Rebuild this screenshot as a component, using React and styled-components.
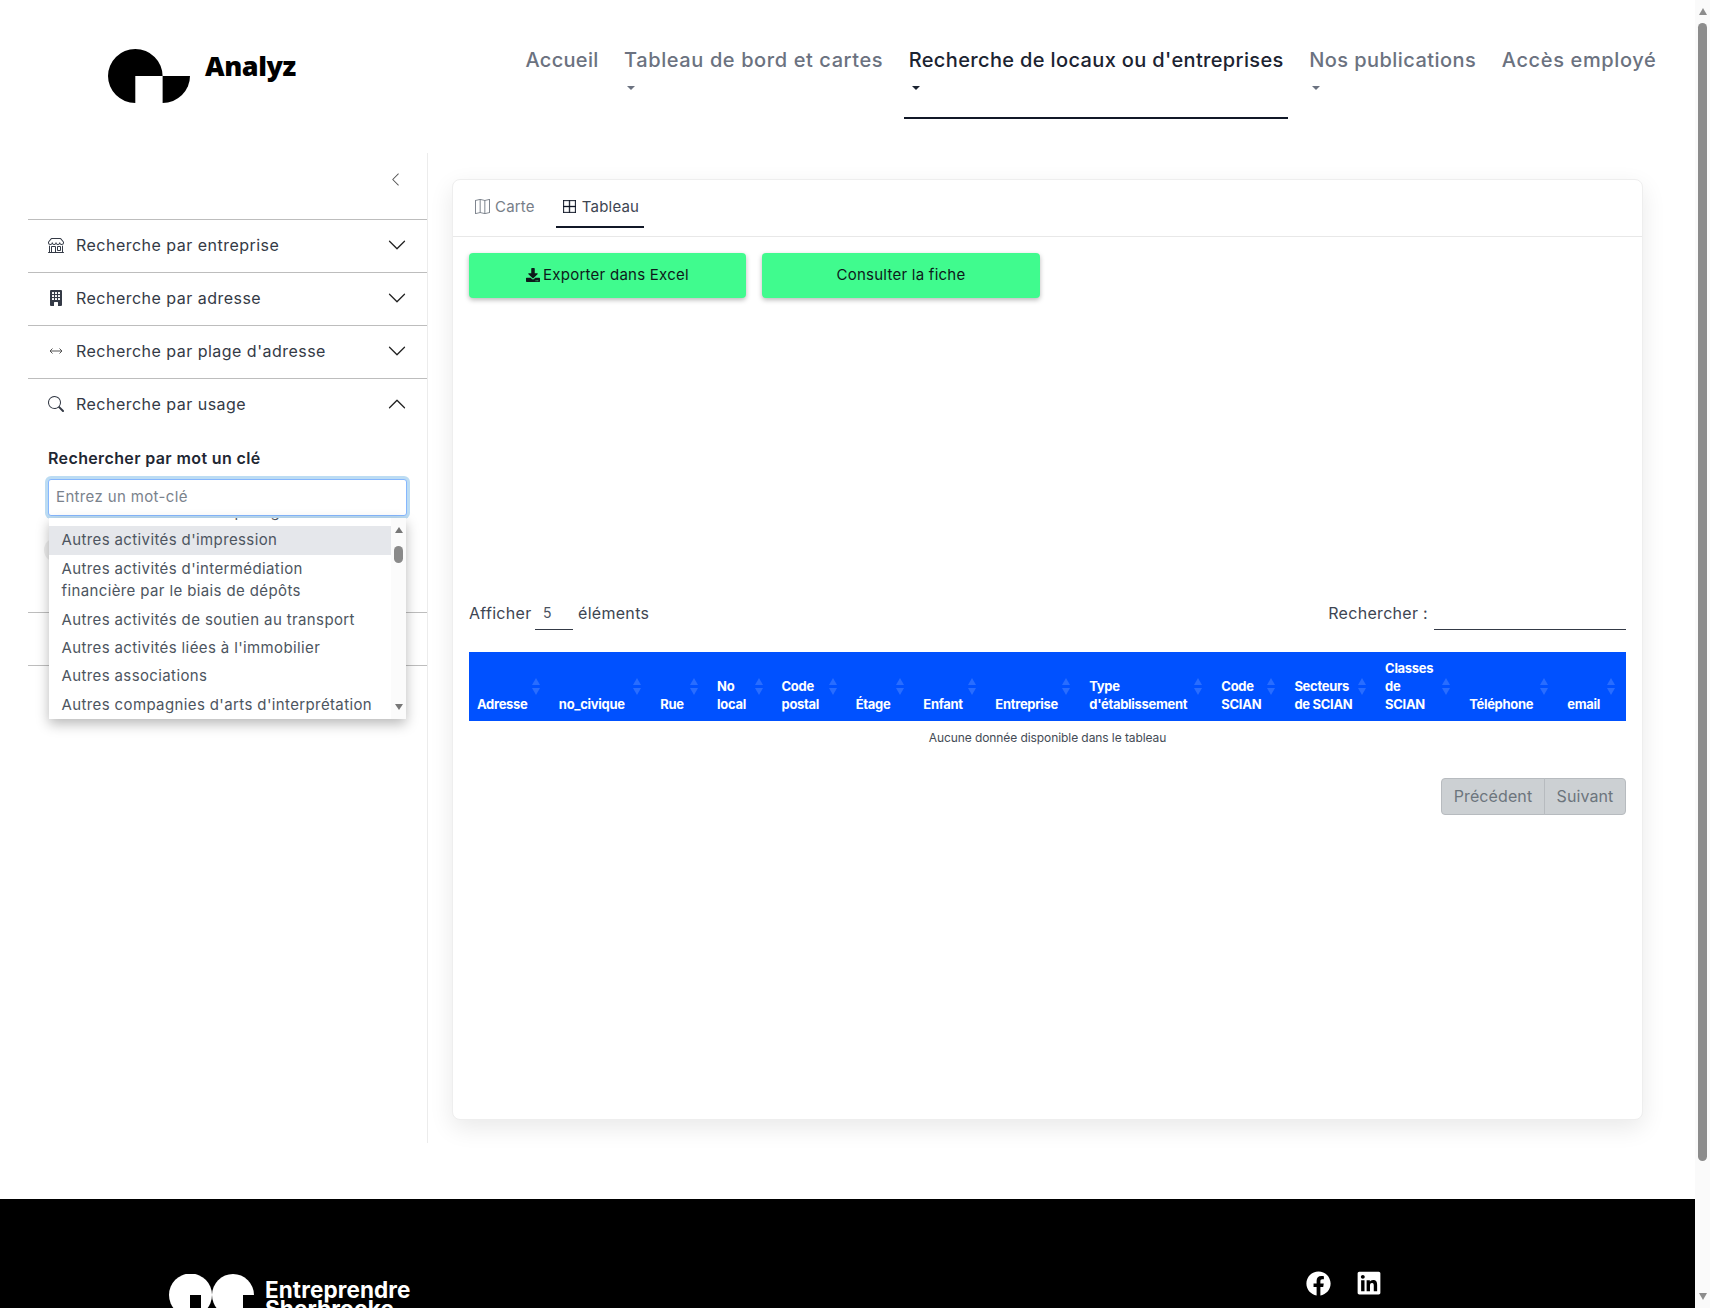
import React from "react";
import styled, { createGlobalStyle } from "styled-components";
import { BsShop, BsBuildingFill, BsSearch, BsChevronDown, BsChevronUp, BsChevronLeft, BsMap, BsBorderAll } from "react-icons/bs";
import { FaDownload, FaFacebook, FaLinkedin } from "react-icons/fa";

const Global = createGlobalStyle`
  html, body { margin: 0; padding: 0; height: 1308px; overflow: hidden; background: #fff; }
  body { font-family: Inter, "Open Sans", "Liberation Sans", sans-serif; color: #343a46; }
  * { box-sizing: border-box; }
`;

const Frame = styled.div`display: flex; height: 1308px; overflow: hidden;`;
const PageArea = styled.div`flex: 1; min-width: 0; display: flex; flex-direction: column;`;

const Triangle = styled.span`
  display: block; width: 0; height: 0;
  border-left: ${p => p.$w / 2}px solid transparent;
  border-right: ${p => p.$w / 2}px solid transparent;
  ${p => (p.$up ? "border-bottom" : "border-top")}: ${p => p.$h}px solid ${p => p.$color};
`;

const Rail = styled.div`
  width: 15px; background: #fafafa; display: flex; flex-direction: column; align-items: center;
  padding: 8px 0 8px;
`;
const RailThumb = styled.div`
  width: 9px; height: 1138px; margin-top: 8px; background: #8c8c8c; border-radius: 5px;
`;
const RailEnd = styled.div`margin-top: auto;`;

const Header = styled.header`height: 153px; display: flex; align-items: flex-start; flex: none;`;
const Brand = styled.div`display: flex; align-items: flex-start; padding: 49px 0 0 108px;`;
const BrandName = styled.span`
  margin: 0 0 0 15px; font-family: "Open Sans", sans-serif; font-weight: 800; font-size: 27px; line-height: 33px; color: #000; letter-spacing: -0.45px;
`;
const Nav = styled.nav`display: flex; margin: 45px 34px 0 auto; gap: 16.5px; height: 74px;`;
const NavItem = styled.a`
  padding: 0 4.5px; border-bottom: 2px solid ${p => (p.$active ? "#111827" : "transparent")};
  color: ${p => (p.$active ? "#1b2331" : "#6b7280")};
  font-size: 20px; font-weight: 500; line-height: 30px; letter-spacing: ${p => p.$ls || "0"};
  white-space: nowrap; display: flex; flex-direction: column; align-items: flex-start;
`;
const Caret = styled.span`margin: 11px 0 0 3px; display: block;`;

const Body = styled.div`display: flex; height: 990px; flex: none;`;
const Sidebar = styled.aside`
  width: 400px; margin-left: 28px; border-right: 1px solid #ececec; flex: none;
`;
const CollapseBar = styled.div`
  height: 66px; display: flex; justify-content: flex-end; padding: 19px 24px 0 0; color: #555; font-size: 15px;
`;
const Row = styled.div`
  height: 53px; border-top: 1px solid #bdbdbd; display: flex; align-items: center; padding: 0 20px 2px 20px;
  font-size: 16px; letter-spacing: 0.48px; color: #343a46;
  ${p => p.$last && "border-bottom: 1px solid #bdbdbd; height: 54px;"}
`;
const RowIcon = styled.span`width: 16px; height: 16px; display: flex; align-items: center; justify-content: center; margin-right: 12px; font-size: 16px; flex: none;`;
const RowChevron = styled.span`margin-left: auto; display: flex; font-size: 20px; color: #222;`;
const Panel = styled.div`height: 181px; padding: 15px 20px 0 20px; position: relative;`;
const FieldLabel = styled.div`font-size: 16px; font-weight: 600; line-height: 24px; color: #1f2733; letter-spacing: 0.37px;`;
const SearchBox = styled.div`position: relative; margin-top: 9px;`;
const KeywordInput = styled.div`
  height: 37px; border: 1px solid #86b7fe; border-radius: 3px; box-shadow: 0 0 0 3px #bcdcf3;
  padding: 0 7px; font-size: 15px; line-height: 34px; color: #7a828c; letter-spacing: 0.36px; background: #fff;
`;
const HiddenChip = styled.div`width: 60px; height: 24px; margin: 22px 0 0 -4px; border-radius: 12px; background: #eee;`;
const Dropdown = styled.div`
  position: absolute; top: 39px; left: 1px; width: 357px; height: 201px; background: #fff;
  box-shadow: 0 5px 12px rgba(0,0,0,.28); display: flex; overflow: hidden; z-index: 5;
`;
const OptionList = styled.div`flex: 1; min-width: 0; margin-top: -20px;`;
const Option = styled.div`
  padding: 3px 12.5px; font-size: 15px; line-height: 22.4px; color: #4d5560; letter-spacing: 0.38px;
  ${p => p.$hi && "background: #e5e7eb;"}
`;
const ListRail = styled.div`width: 15px; background: #fbfbfb; display: flex; flex-direction: column; align-items: center; padding: 9px 0 9px;`;
const ListThumb = styled.div`width: 9px; height: 17px; margin-top: 13px; border-radius: 5px; background: #8a8a8a;`;

const Main = styled.main`flex: 1; min-width: 0; padding: 26px 52px 23px 24px;`;
const Card = styled.section`
  height: 941px; background: #fff; border: 1px solid #eee; border-radius: 8px;
  box-shadow: 0 8px 24px rgba(0,0,0,.09);
`;
const Tabs = styled.div`height: 57px; border-bottom: 1px solid #e8e8e8; display: flex; gap: 15px; padding-left: 16px;`;
const Tab = styled.div`
  height: 48px; padding: 6px ${p => p.$right}px 0 ${p => p.$left}px; display: flex; align-items: center; gap: ${p => p.$gap}px; font-size: 15px; letter-spacing: 0.2px;
  color: ${p => (p.$active ? "#3d4552" : "#777e88")};
  border-bottom: 2px solid ${p => (p.$active ? "#111827" : "transparent")};
  svg { color: ${p => (p.$active ? "#111827" : "#777e88")}; ${p => p.$active && "stroke: currentColor; stroke-width: 0.5;"} }
`;
const Actions = styled.div`display: flex; gap: 16px; padding: 16px 0 0 16px;`;
const ActionButton = styled.button`
  width: ${p => p.$w}px; height: 45px; border: 0; border-radius: 4px; background: #40fb8e;
  box-shadow: 0 2px 5px rgba(0,0,0,.28); display: flex; align-items: center; justify-content: center; gap: 3px; padding: 0 0 2px;
  font-family: inherit; font-size: 15px; letter-spacing: 0.25px; color: #0d1a1a;
`;
const TableArea = styled.div`padding: 302px 16px 0 16px;`;
const Controls = styled.div`display: flex; align-items: flex-start; height: 30px;`;
const ControlText = styled.span`font-size: 16px; line-height: 26px; letter-spacing: 0.3px; color: #3d4552;`;
const SelectBox = styled.div`
  width: 38px; height: 30px; margin: 0 5px 0 3.5px; border-bottom: 1px solid #343a46; padding-left: 8px; font-size: 14px; line-height: 26px; color: #4a5260;
`;
const FilterInput = styled.div`width: 192px; height: 30px; margin-left: 6px; border-bottom: 1px solid #343a46;`;
const Push = styled.div`margin-left: auto;`;
const Table = styled.table`width: 100%; margin-top: 22px; border-collapse: collapse; table-layout: fixed;`;
const HeadCell = styled.th`
  position: relative; background: #0051ff; color: #fff; padding: 7px 8px 8px; text-align: left; vertical-align: bottom;
  font-size: 13px; line-height: 18px; font-weight: 700; letter-spacing: -0.3px; white-space: pre-line;
`;
const Sorter = styled.span`position: absolute; top: 26px; right: 11px; display: flex; flex-direction: column; gap: 3px;`;
const EmptyCell = styled.td`height: 32px; text-align: center; font-size: 12px; color: #444b55; letter-spacing: -0.08px; padding: 0;`;
const Pager = styled.div`display: flex; justify-content: flex-end; margin-top: 25px;`;
const PageButton = styled.div`
  height: 37px; width: ${p => p.$w}px; background: #ccd0d3; border: 1px solid #b7bbbf; color: #6c757d; font-size: 16px; line-height: 35px;
  text-align: center; letter-spacing: 0.1px;
  border-radius: ${p => (p.$first ? "4px 0 0 4px" : "0 4px 4px 0")};
  ${p => !p.$first && "margin-left: -1px;"}
`;

const Footer = styled.footer`
  margin-top: 56px; height: 109px; flex: none; background: #000; overflow: hidden; display: flex; align-items: flex-start; padding: 71px 313px 0 169px;
`;
const FooterBrand = styled.div`display: flex; align-items: flex-start; padding-top: 4px;`;
const FooterName = styled.div`
  margin: 6px 0 0 11px; color: #fff; font-size: 22.5px; font-weight: 700; line-height: 19px; letter-spacing: 0.1px; white-space: pre-line;
`;
const Socials = styled.div`margin-left: auto; display: flex; align-items: center; gap: 25px; color: #fff;`;

const columns = [
  ["Adresse", 81.8], ["no_civique", 101.4], ["Rue", 56.7], ["No\nlocal", 64.4], ["Code\npostal", 74.1], ["Étage", 67.6], ["Enfant", 72],
  ["Entreprise", 93.8], ["Type\nd'établissement", 132], ["Code\nSCIAN", 73], ["Secteurs\nde SCIAN", 90.6], ["Classes\nde\nSCIAN", 84], ["Téléphone", 98], ["email", 66.6],
];

const options = [
  "Autres activités d'entreposage", "Autres activités d'impression", "Autres activités d'intermédiation financière par le biais de dépôts",
  "Autres activités de soutien au transport", "Autres activités liées à l'immobilier", "Autres associations", "Autres compagnies d'arts d'interprétation",
];

const LogoMark = () => (
  <svg width="82" height="54" viewBox="0 0 82 54">
    <path d="M27.3 54A27.3 27 0 1 1 54.6 27H27.3Z" fill="#000" />
    <path d="M54.6 27H82A27.4 27 0 0 1 54.6 54Z" fill="#000" />
  </svg>
);

const FooterMark = () => (
  <svg width="85" height="40" viewBox="0 0 85 40">
    <circle cx="21.5" cy="21" r="21.5" fill="#fff" />
    <circle cx="64" cy="21" r="21" fill="#fff" />
    <rect x="74" y="21" width="11" height="19" fill="#000" />
    <rect x="21" y="21" width="11" height="19" fill="#000" />
  </svg>
);

const ArrowsIcon = () => (
  <svg width="16" height="16" viewBox="0 0 16 16" fill="none" stroke="#555" strokeWidth="1">
    <path d="M2 8h12M4.5 5.5 2 8l2.5 2.5M11.5 5.5 14 8l-2.5 2.5" />
  </svg>
);

const AccordionRow = ({ icon, label, open, last }) => (
  <Row $last={last}>
    {icon && <RowIcon>{icon}</RowIcon>}
    {label}
    <RowChevron>{open ? <BsChevronUp /> : <BsChevronDown />}</RowChevron>
  </Row>
);

export default function App() {
  return (
    <Frame>
      <Global />
      <PageArea>
        <Header>
          <Brand>
            <LogoMark />
            <BrandName>Analyz</BrandName>
          </Brand>
          <Nav>
            <NavItem $ls="0.3px">Accueil</NavItem>
            <NavItem $ls="0.6px">Tableau de bord et cartes<Caret><Triangle $w={8} $h={4} $color="#6b7280" /></Caret></NavItem>
            <NavItem $active $ls="0.36px">Recherche de locaux ou d'entreprises<Caret><Triangle $w={8} $h={4} $color="#1b2331" /></Caret></NavItem>
            <NavItem $ls="0.44px">Nos publications<Caret><Triangle $w={8} $h={4} $color="#6b7280" /></Caret></NavItem>
            <NavItem $ls="0.64px">Accès employé</NavItem>
          </Nav>
        </Header>
        <Body>
          <Sidebar>
            <CollapseBar><BsChevronLeft /></CollapseBar>
            <AccordionRow icon={<BsShop />} label="Recherche par entreprise" />
            <AccordionRow icon={<BsBuildingFill />} label="Recherche par adresse" />
            <AccordionRow icon={<ArrowsIcon />} label="Recherche par plage d'adresse" />
            <AccordionRow icon={<BsSearch />} label="Recherche par usage" open />
            <Panel>
              <FieldLabel>Rechercher par mot un clé</FieldLabel>
              <SearchBox>
                <KeywordInput>Entrez un mot-clé</KeywordInput>
                <Dropdown>
                  <OptionList>
                    {options.map((o, i) => <Option key={o} $hi={i === 1}>{o}</Option>)}
                  </OptionList>
                  <ListRail>
                    <Triangle $up $w={9} $h={6} $color="#777" />
                    <ListThumb />
                    <RailEnd><Triangle $w={9} $h={6} $color="#777" /></RailEnd>
                  </ListRail>
                </Dropdown>
              </SearchBox>
              <HiddenChip />
            </Panel>
            <AccordionRow last />
          </Sidebar>
          <Main>
            <Card>
              <Tabs>
                <Tab $left={6} $right={6} $gap={5}><BsMap size={15} />Carte</Tab>
                <Tab $active $left={7} $right={4.5} $gap={6}><BsBorderAll size={13} />Tableau</Tab>
              </Tabs>
              <Actions>
                <ActionButton $w={277}><FaDownload size={14} />Exporter dans Excel</ActionButton>
                <ActionButton $w={278}>Consulter la fiche</ActionButton>
              </Actions>
              <TableArea>
                <Controls>
                  <ControlText>Afficher</ControlText>
                  <SelectBox>5</SelectBox>
                  <ControlText>éléments</ControlText>
                  <Push />
                  <ControlText>Rechercher :</ControlText>
                  <FilterInput />
                </Controls>
                <Table>
                  <colgroup>{columns.map(([n, w]) => <col key={n} style={{ width: w }} />)}</colgroup>
                  <thead>
                    <tr>
                      {columns.map(([n]) => (
                        <HeadCell key={n}>
                          {n}
                          <Sorter>
                            <Triangle $up $w={8} $h={7} $color="rgba(255,255,255,.16)" />
                            <Triangle $w={8} $h={7} $color="rgba(255,255,255,.16)" />
                          </Sorter>
                        </HeadCell>
                      ))}
                    </tr>
                  </thead>
                  <tbody>
                    <tr><EmptyCell colSpan={14}>Aucune donnée disponible dans le tableau</EmptyCell></tr>
                  </tbody>
                </Table>
                <Pager>
                  <PageButton $first $w={104}>Précédent</PageButton>
                  <PageButton $w={82}>Suivant</PageButton>
                </Pager>
              </TableArea>
            </Card>
          </Main>
        </Body>
        <Footer>
          <FooterBrand>
            <FooterMark />
            <FooterName>{"Entreprendre\nSherbrooke"}</FooterName>
          </FooterBrand>
          <Socials>
            <FaFacebook size={25} />
            <FaLinkedin size={26} />
          </Socials>
        </Footer>
      </PageArea>
      <Rail>
        <Triangle $up $w={9} $h={7} $color="#8c8c8c" />
        <RailThumb />
        <RailEnd><Triangle $w={9} $h={7} $color="#8c8c8c" /></RailEnd>
      </Rail>
    </Frame>
  );
}
